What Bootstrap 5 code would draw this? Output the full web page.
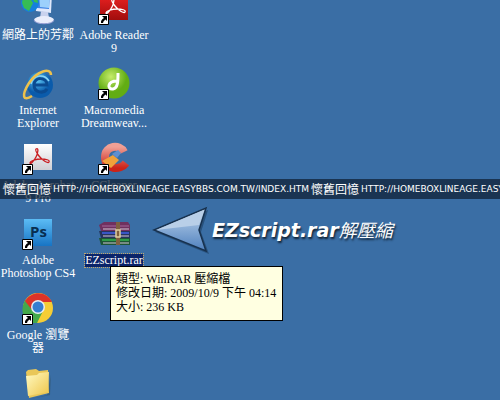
<!DOCTYPE html>
<html lang="zh-Hant">
<head>
<meta charset="utf-8">
<meta name="viewport" content="width=device-width, initial-scale=1">
<title>Desktop</title>
<link href="https://cdn.jsdelivr.net/npm/bootstrap@5.3.0/dist/css/bootstrap.min.css" rel="stylesheet">
<style>
body{background:#3a6ea5;font-family:"Liberation Serif","Noto Sans CJK TC",serif;font-size:12px;line-height:13px;color:#fff}
.shortcuts{margin-top:-7px}
.shortcut{width:76px;height:75px;color:#fff}
.shortcut svg{display:block;flex:none;margin-bottom:4px;overflow:visible}
.shortcut span{max-width:76px}
.selected span{background:#0a246a;outline:1px dotted #c5a56a}
.tip{left:110px;top:266px;background:#ffffe1;color:#000;border:1px solid #000;line-height:14px;padding:5px 6px 6px 5px}
.callout{left:152px;top:204px}
.callout-text{font:italic bold 19px/24px "DejaVu Sans","Noto Sans CJK TC",sans-serif;text-shadow:1px 2px 2px #123}
.callout-text small{font-size:18px;font-weight:400}
.strip{left:0;top:179px;height:20px;padding-left:3px;gap:2px;background:rgba(14,30,50,.72)}
.strip b{font:400 12px/20px "Noto Sans CJK TC",sans-serif}
.strip a{font:9px/20px "DejaVu Sans",sans-serif;color:#fff}
</style>
</head>
<body>
<svg class="position-absolute" width="0" height="0" aria-hidden="true">
<defs>
<linearGradient id="red" x2="0" y2="1"><stop stop-color="#e22"/><stop offset="1" stop-color="#a00d0d"/></linearGradient>
<linearGradient id="ps" x2="0" y2="1"><stop stop-color="#5cbcf5"/><stop offset="1" stop-color="#1774c4"/></linearGradient>
<linearGradient id="white" x2="0" y2="1"><stop stop-color="#fff"/><stop offset="1" stop-color="#cfcfd4"/></linearGradient>
<radialGradient id="green" cx=".4" cy=".3"><stop stop-color="#c5ec6a"/><stop offset="1" stop-color="#62ad14"/></radialGradient>
<radialGradient id="ie" cx=".4" cy=".3"><stop stop-color="#5fc8f5"/><stop offset="1" stop-color="#0a5bab"/></radialGradient>
<linearGradient id="cc" x2="0" y2="1"><stop stop-color="#f0a095"/><stop offset="1" stop-color="#cc2318"/></linearGradient>
<linearGradient id="fold" x2="1" y2="1"><stop stop-color="#fffbc4"/><stop offset="1" stop-color="#efc549"/></linearGradient>
<linearGradient id="arrow" x2="0" y2="1"><stop stop-color="#c3d8ee"/><stop offset="1" stop-color="#4d7fbd"/></linearGradient>
<g id="link"><path fill="#fff" stroke="#000" d="M.5 21.5h10v10h-10z"/><path d="M4 23h5v5L7.500 26.500Q5 28 5 30H3q-.5-3 3-5z"/></g>
<g id="acro" fill="none" stroke-width="1.300"><path d="M14 6c3-2 2 4 0 8s-6 8-6 6 6-4 11-4 9 1 8 3-7-2-10-6-4-6-3-7z"/></g>
</defs>
</svg>
<main class="vh-100 position-relative overflow-hidden">
<div class="shortcuts d-flex align-items-start">
<div class="d-flex flex-column">
<a href="#" class="shortcut d-flex flex-column align-items-center text-center text-decoration-none"><svg width="32" height="32"><path fill="#dfe8fb" d="M12 0h18l-1 20-15-2z"/><path fill="#3d83e6" d="M14 0h14l-1 16-12-1z"/><path fill="#9cd0fc" d="M17 0h11l-1 15-9-1z"/><path fill="#c9d2ee" d="M19 18l7 1 1 6h-9z"/><ellipse cx="22" cy="27" rx="10" ry="4" fill="#e9edfb"/><path fill="none" stroke="#8d97cf" d="M12 27c1 5 19 5 20 0"/><circle cx="8" cy="10" r="9" fill="#1680db"/><path fill="#36bd55" d="M1 4l7 1 3 5-4 8-5-3-2-5zM10 2l5 2 1 6-4-1z"/></svg><span>網路上的芳鄰</span></a>
<a href="#" class="shortcut d-flex flex-column align-items-center text-center text-decoration-none"><svg width="32" height="32"><circle cx="18" cy="17" r="13" fill="url(#ie)"/><path fill="none" stroke="#0b4b91" stroke-width="3" d="M25 21c-3 5-13 4-13-4 0-9 13-8 13 0H13"/><path fill="none" stroke="#8bd6f8" stroke-width="1.500" d="M9 16C11 7 22 5 27 13"/><path fill="none" stroke="#edc14c" stroke-width="2.500" d="M29 7c0-8-14-4-22 8-8 13-6 19 3 13"/></svg><span>Internet<br>Explorer</span></a>
<a href="#" class="shortcut d-flex flex-column align-items-center text-center text-decoration-none"><svg width="32" height="32"><path fill="url(#white)" d="M2 1h28v26H2z"/><use href="#acro" stroke="#c91d20"/><use href="#link"/></svg><span>Adobe Acrobat 9 Pro</span></a>
<a href="#" class="shortcut d-flex flex-column align-items-center text-center text-decoration-none"><svg width="32" height="32"><path fill="url(#ps)" d="M2 1h28v27H2z"/><text x="8" y="19" font-family="Open Sans,sans-serif" font-size="15" font-weight="700" fill="#082e50">Ps</text><use href="#link"/></svg><span>Adobe<br>Photoshop CS4</span></a>
<a href="#" class="shortcut d-flex flex-column align-items-center text-center text-decoration-none"><svg width="32" height="32"><circle cx="16" cy="15" r="15" fill="#f5cd35"/><path fill="#44a94b" d="M16 15L3 7C-5 24 8 31 15 30l6-12z"/><path fill="#dd3328" d="M3 8C10-3 25-2 30 9H16l-6 8z"/><circle cx="16" cy="14" r="7" fill="#e8eef2"/><circle cx="16" cy="14" r="5.500" fill="#367ed0"/><use href="#link"/></svg><span>Google 瀏覽<br>器</span></a>
<a href="#" class="shortcut d-flex flex-column align-items-center text-center text-decoration-none" aria-label="Folder"><svg width="32" height="32"><path fill="#2f4f66" opacity=".5" d="M8 31l20-4 1-20-4 20z"/><path fill="#e9c758" d="M4 4l2-2 8-1 3 2 9-1 1 23-20 5z"/><path fill="url(#fold)" d="M4 8l11-1 2-2 10-1-1 20L6 28z"/></svg></a>
</div>
<div class="d-flex flex-column">
<a href="#" class="shortcut d-flex flex-column align-items-center text-center text-decoration-none"><svg width="32" height="32"><path fill="url(#red)" d="M2 1h28v26H2z"/><use href="#acro" stroke="#fff"/><use href="#link"/></svg><span>Adobe Reader 9</span></a>
<a href="#" class="shortcut d-flex flex-column align-items-center text-center text-decoration-none"><svg width="32" height="32"><circle cx="16" cy="15" r="15.500" fill="url(#green)"/><path fill="none" stroke="#fff" stroke-width="3" d="M20 5c0 8 0 15-5 16-6 1-6-8 4-8"/><use href="#link"/></svg><span>Macromedia<br>Dreamweav...</span></a>
<a href="#" class="shortcut d-flex flex-column align-items-center text-center text-decoration-none"><svg width="32" height="32"><path fill="none" stroke="url(#cc)" stroke-width="8" d="M26 9C22 1 7 2 7 14c0 13 15 14 21 6"/><path fill="#f1a13a" d="M4 18l11-6 6 5-8 8z"/><path fill="#5f8fd0" d="M14 11l6-4 3 3-4 5z"/><use href="#link"/></svg><span>CCleaner</span></a>
<a href="#" class="shortcut selected d-flex flex-column align-items-center text-center text-decoration-none"><svg width="32" height="32"><path fill="#70305f" d="M1 7l5-3h24l2 3v6H3z"/><path fill="#26345f" d="M1 13h31v7H3z"/><path fill="#1d5435" d="M1 20h31v7H3z"/><path stroke="#a5669b" d="M4 8h27"/><path stroke="#d1c4d3" d="M5 11h26M5 18h26M5 25h26"/><path stroke="#3a55c5" stroke-width="2" d="M4 15h27"/><path stroke="#2f9a48" stroke-width="2" d="M4 22h27"/><path fill="#80603f" d="M18 4h4v23h-4z"/><path fill="none" stroke="#dfcf9f" stroke-width="1.500" d="M18 12h4v7h-4z"/></svg><span>EZscript.rar</span></a>
</div>
</div>
<div class="strip position-absolute w-100 d-flex overflow-hidden text-nowrap"><b>懷舊回憶</b><a class="text-decoration-none" href="#">HTTP://HOMEBOXLINEAGE.EASYBBS.COM.TW/INDEX.HTM</a><b>懷舊回憶</b><a class="text-decoration-none" href="#">HTTP://HOMEBOXLINEAGE.EASYBBS.COM.TW/INDEX.HTM</a></div>
<div class="callout position-absolute d-flex align-items-center text-nowrap"><svg width="60" height="52"><path fill="#163453" opacity=".5" d="M3 28L56 6l-7 22 8 22z"/><path fill="url(#arrow)" stroke="#17314e" stroke-width="1.500" d="M2 26L54 4l-7 22 7 21z"/><path fill="#b9cfe8" d="M4 26L52 6l-5 15z"/></svg><div class="callout-text">EZscript.rar<small>解壓縮</small></div></div>
<div class="tip position-absolute text-nowrap" role="tooltip">類型: WinRAR 壓縮檔<br>修改日期: 2009/10/9 下午 04:14<br>大小: 236 KB</div>
</main>
<script src="https://cdn.jsdelivr.net/npm/bootstrap@5.3.0/dist/js/bootstrap.bundle.min.js"></script>
</body>
</html>
